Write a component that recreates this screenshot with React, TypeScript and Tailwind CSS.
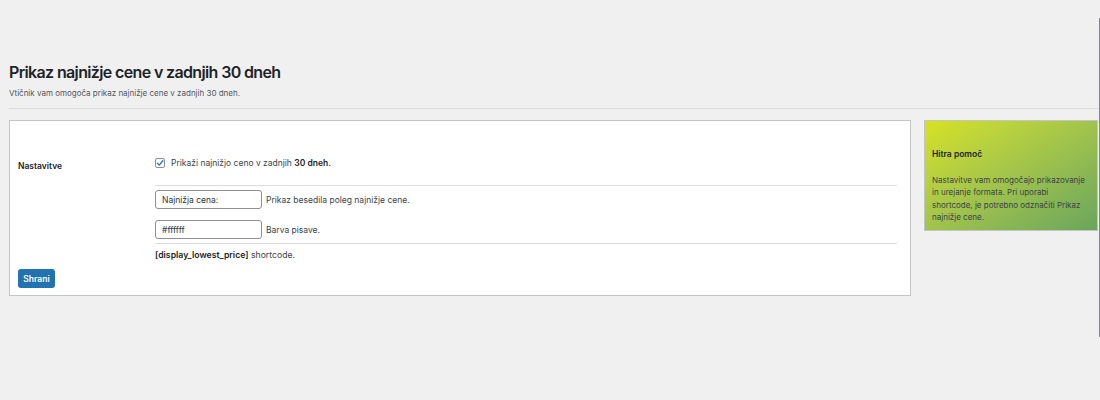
import React from 'react';

function CheckBox() {
    return (
        <span className="w-[10px] h-[10px] rounded-[2px] border border-[#8c8f94] bg-white flex items-center justify-center shrink-0">
            <svg width="8" height="8" viewBox="0 0 10 10" fill="none">
                <path d="M1.5 5.2 L4 7.6 L8.6 2.2" stroke="#2271b1" strokeWidth="1.6" strokeLinecap="round" strokeLinejoin="round" />
            </svg>
        </span>
    );
}

function Field({ value, hint }: { value: string; hint: string }) {
    return (
        <div className="flex items-center">
            <div className="w-[107px] h-[19px] border border-[#8c8f94] rounded-[3px] bg-white pl-[6px] flex items-center text-[#2c3338]">
                {value}
            </div>
            <span className="ml-[4px] text-[#3c434a]">{hint}</span>
        </div>
    );
}

export default function App() {
    return (
        <div className="relative min-h-[400px] bg-[#f0f0f1] pl-[9px] pr-[2px] font-['Inter',sans-serif] text-[8.5px] leading-[14px] text-[#3c434a]">
            <div className="absolute right-0 top-[18px] h-[319px] w-px bg-[#8a8290]"></div>

            <div className="pt-[61px]">
                <h1 className="text-[16px] leading-[22px] font-semibold tracking-[-0.04em] text-[#1d2327]">Prikaz najnižje cene v zadnjih 30 dneh</h1>
                <p className="mt-[3px] text-[8px] text-[#50575e]">Vtičnik vam omogoča prikaz najnižje cene v zadnjih 30 dneh.</p>
            </div>
            <div className="mt-[8px] h-px bg-[#dcdcde]"></div>

            <div className="mt-[11px] flex items-start">
                {/* settings card */}
                <div className="flex-1 bg-white border border-[#c3c4c7] pl-[8px] pr-[13px] pt-[32px] pb-[7px]">
                    <div className="flex">
                        <div className="w-[137px] pt-[6px] font-semibold text-[#1d2327]">Nastavitve</div>
                        <div className="flex-1">
                            <label className="h-[20px] flex items-center gap-[6px]">
                                <CheckBox />
                                <span>
                                    Prikaži najnižjo ceno v zadnjih <b className="font-semibold text-[#1d2327]">30 dneh.</b>
                                </span>
                            </label>
                            <div className="mt-[12px] h-px bg-[#dcdcde]"></div>
                            <div className="mt-[4px]">
                                <Field value="Najnižja cena:" hint="Prikaz besedila poleg najnižje cene." />
                            </div>
                            <div className="mt-[11px]">
                                <Field value="#ffffff" hint="Barva pisave." />
                            </div>
                            <div className="mt-[4px] h-px bg-[#dcdcde]"></div>
                            <p className="mt-[4px] text-[8.7px]">
                                <b className="font-semibold text-[#1d2327]">[display_lowest_price]</b> shortcode.
                            </p>
                        </div>
                    </div>
                    <button className="mt-[7px] w-[37px] h-[19px] rounded-[3px] bg-[#2271b1] text-white font-semibold flex items-center justify-center">
                        Shrani
                    </button>
                </div>

                {/* help box */}
                <aside className="ml-[13px] w-[174px] h-[111px] border border-[#c3c4c7] bg-linear-to-br from-[#d6e21e] to-[#6aa55c] px-[7px] pt-[27px] text-[#3c434a]">
                    <h2 className="font-semibold text-[#1d2327] leading-[12px]">Hitra pomoč</h2>
                    <p className="mt-[14px] text-[8px] leading-[12.4px]">
                        Nastavitve vam omogočajo prikazovanje<br />
                        in urejanje formata. Pri uporabi<br />
                        shortcode, je potrebno odznačiti Prikaz<br />
                        najnižje cene.
                    </p>
                </aside>
            </div>
        </div>
    );
}
